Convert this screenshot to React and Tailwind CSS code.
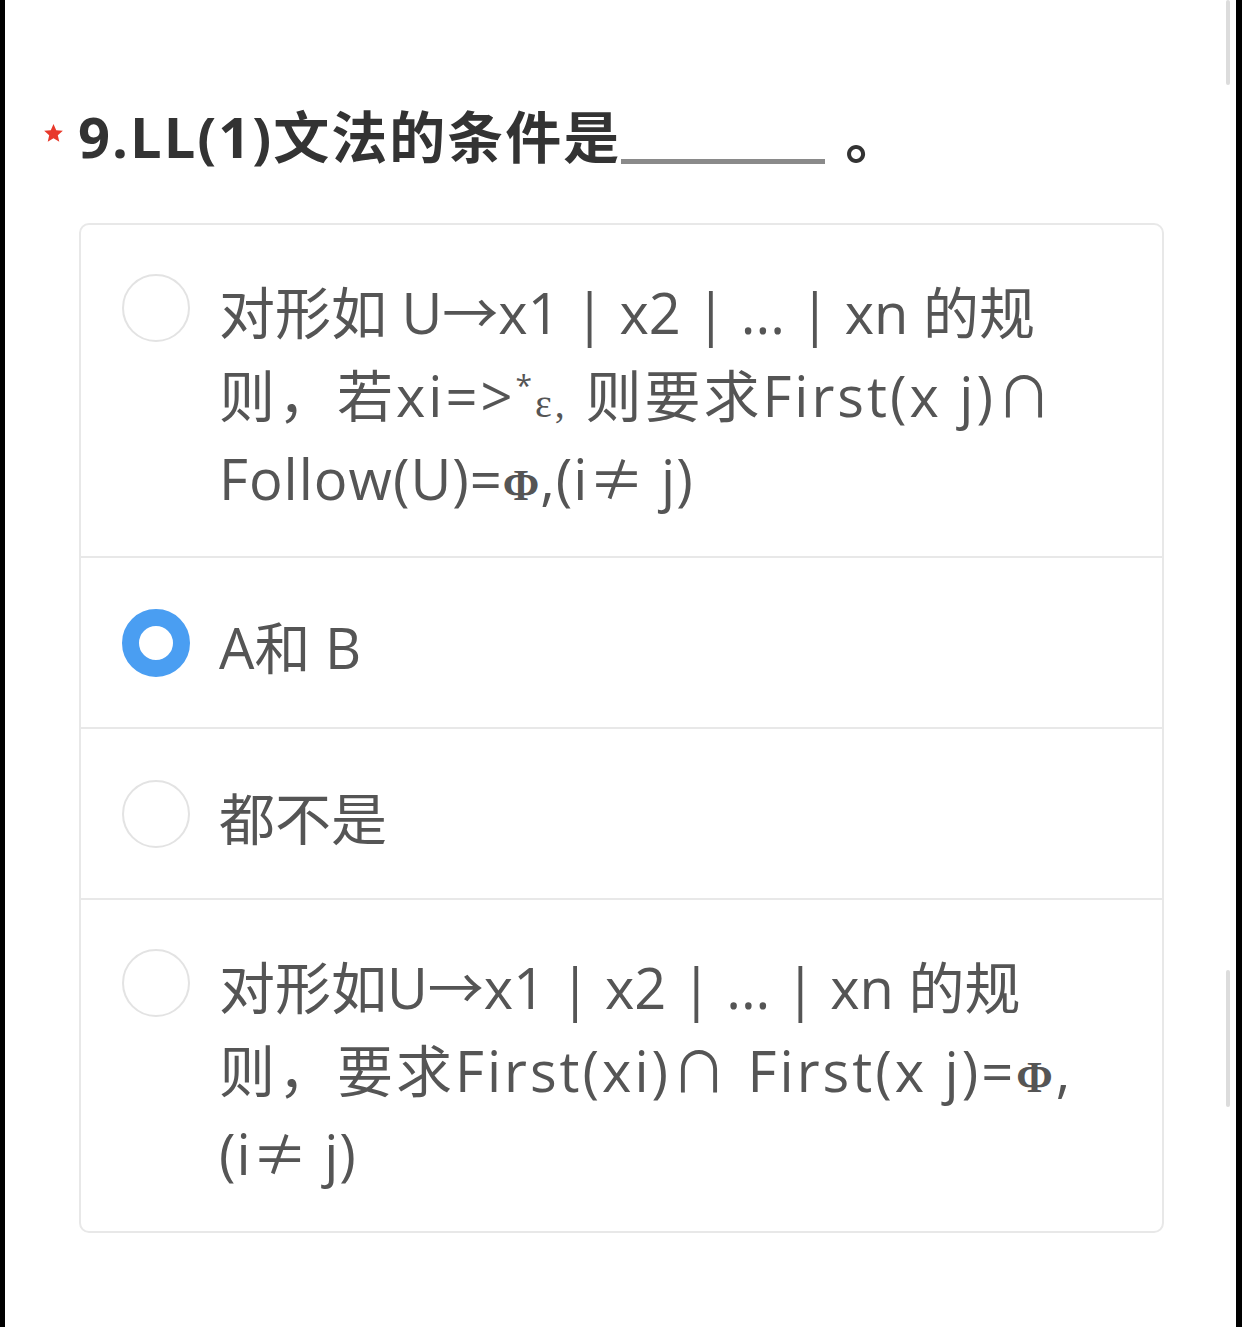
import React, { useState } from 'react';

const serif = { fontFamily: '"Liberation Serif", serif' };
const cjk = { fontFamily: '"Noto Sans CJK SC", sans-serif' };

const options = [
    {
        id: 'a',
        lines: [
            { t: '', c: <>对形如 U→x1 | x2 | ... | xn 的规</> },
            { t: 'tracking-[3px]', c: <>则，若xi=&gt;<span className="text-[30px] leading-none align-[0.7em]">*</span><span className="text-[40px] leading-none" style={serif}>ε,</span> 则要求First(x j)∩</> },
            { t: 'tracking-[1px]', c: <>Follow(U)=<span style={serif} className="font-bold text-[44px] leading-none">Φ</span>,(i<span style={cjk} className="leading-none">≠</span> j)</> },
        ],
    },
    { id: 'ab', lines: [{ t: '', c: <>A和 B</> }] },
    { id: 'none', lines: [{ t: '', c: <>都不是</> }] },
    {
        id: 'd',
        lines: [
            { t: '', c: <>对形如U→x1 | x2 | ... | xn 的规</> },
            { t: 'tracking-[3px]', c: <>则，要求First(xi)∩ First(x j)=<span style={serif} className="font-bold text-[44px] leading-none">Φ</span>,</> },
            { t: 'tracking-[1px]', c: <>(i<span style={cjk} className="leading-none">≠</span> j)</> },
        ],
    },
];

const Radio = ({ checked }) => (
    <div className="h-[83px] flex items-center shrink-0">
        <div
            className={
                checked
                    ? 'w-[68px] h-[68px] rounded-full border-[17px] border-[#4a9ef2] bg-white'
                    : 'w-[68px] h-[68px] rounded-full border-2 border-[#e3e3e3] bg-white'
            }
        />
    </div>
);

export default function App() {
    const [selected, setSelected] = useState('ab');

    return (
        <div
            className="flex w-[1242px] h-[1327px] bg-white overflow-hidden"
            style={{ fontFamily: '"Open Sans", "Noto Sans CJK SC", sans-serif' }}
        >
            <div className="w-[5px] bg-black shrink-0" />

            <div className="flex-1 pt-[96px]">
                {/* question title */}
                <div className="flex items-center pl-[38px]">
                    <svg viewBox="0 0 20 20" className="w-[21px] h-[21px] mr-[14px] -mt-[6px]" fill="#e8392b">
                        <path d="M10 1l2.6 5.8 6.3.6-4.8 4.2 1.4 6.2L10 14.6l-5.5 3.2 1.4-6.2L1.1 7.4l6.3-.6z" />
                    </svg>
                    <h2 className="text-[56px] font-bold text-[#333] leading-[80px] tracking-[2px] whitespace-nowrap">
                        9.LL(1)文法的条件是
                        <span className="inline-block w-[204px] border-b-[5px] border-[#8a8a8a] translate-y-[6px]" />
                        <span className="ml-[20px]">。</span>
                    </h2>
                </div>

                {/* options */}
                <div className="ml-[74px] mr-[59px] mt-[47px] border-2 border-[#e8e8e8] rounded-[10px]">
                    {options.map((opt, i) => (
                        <div
                            key={opt.id}
                            onClick={() => setSelected(opt.id)}
                            className={
                                'flex gap-[29px] pl-[41px] cursor-pointer ' +
                                (opt.lines.length > 1 ? 'py-[41px] ' : 'py-[43px] ') +
                                (i > 0 ? 'border-t-2 border-[#e8e8e8]' : '')
                            }
                        >
                            <Radio checked={selected === opt.id} />
                            <div className="text-[56px] leading-[83px] text-[#555] mt-[5px] -mb-[5px]">
                                {opt.lines.map((line, j) => (
                                    <div key={j} className={'whitespace-nowrap ' + line.t}>{line.c}</div>
                                ))}
                            </div>
                        </div>
                    ))}
                </div>
            </div>

            {/* scroll track */}
            <div className="w-[13px] shrink-0 flex flex-col items-center pr-[4px]">
                <div className="w-[4px] h-[85px] bg-[#dcdcdc] rounded-full" />
                <div className="h-[885px]" />
                <div className="w-[4px] h-[137px] bg-[#dcdcdc] rounded-full" />
            </div>
            <div className="w-[6px] bg-black shrink-0" />
        </div>
    );
}
